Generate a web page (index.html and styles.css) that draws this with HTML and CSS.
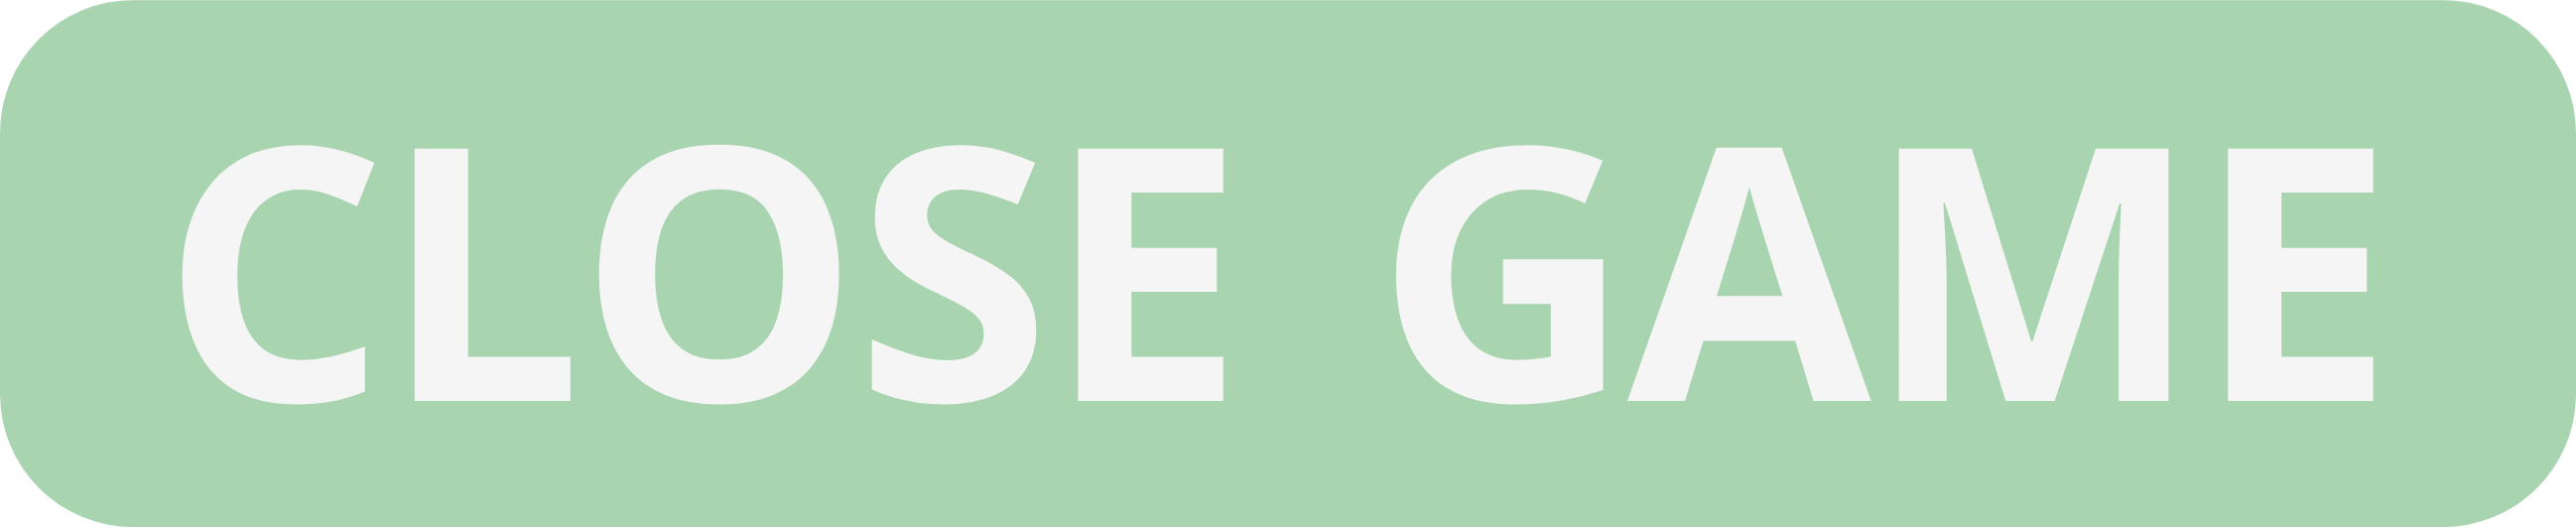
FILE: index.html
```html
<!DOCTYPE html>
<html lang="en">
<head>
<meta charset="utf-8">
<title>Close Game</title>
<link rel="stylesheet" href="styles.css">
</head>
<body>
<div class="page">
  <button class="close-btn" type="button"><span class="close-label">CLOSE GAME</span></button>
</div>
</body>
</html>
```
FILE: styles.css
```css
html, body {
  margin: 0;
  padding: 0;
  background: #ffffff;
}
.page {
  width: 2596px;
  height: 532px;
  display: flex;
  align-items: flex-start;
}
.close-btn {
  width: 2596px;
  height: 531px;
  margin: 0;
  padding: 0 0 0 163px;
  border: none;
  border-radius: 134px;
  background: #a9d4b0;
  box-shadow: inset 0 1px 0 rgba(255, 255, 255, 0.18);
  display: flex;
  align-items: center;
  justify-content: flex-start;
  cursor: pointer;
}
.close-label {
  font-family: "Open Sans", "Noto Sans", sans-serif;
  font-weight: 700;
  font-size: 356px;
  line-height: 1;
  color: #f5f5f5;
  letter-spacing: -4px;
  word-spacing: 48px;
  white-space: nowrap;
}
```
